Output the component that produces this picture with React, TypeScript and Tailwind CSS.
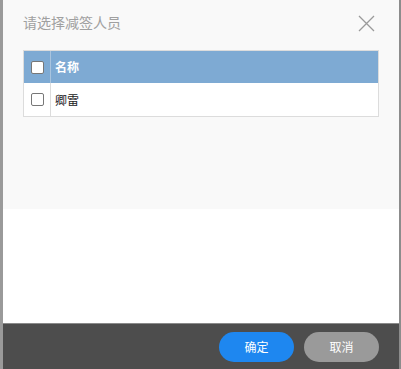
const App = () => {
	return (
		<div
			className="flex h-[369px] w-[401px] flex-col border-l-[3px] border-r-[2px] border-l-[#9a9a9a] border-r-[#8c8c8c] bg-white"
			style={{ fontFamily: '"Noto Sans CJK SC", "Liberation Sans", sans-serif' }}
		>
			<div className="h-[209px] bg-[#f9f9f9] px-[20px]">
				<div className="flex h-[50px] items-start justify-between">
					<p className="mt-[12px] text-[14px] leading-[20px] text-[#a0a0a0]">请选择减签人员</p>
					<svg width="17" height="17" viewBox="0 0 17 17" className="mr-[4px] mt-[15px]">
						<path d="M1 1L16 16M16 1L1 16" stroke="#9a9a9a" strokeWidth="1.3" fill="none" />
					</svg>
				</div>
				<div className="w-[356px] border border-[#dcdcdc] bg-white">
					<div className="flex h-[32px] bg-[#7eaad3]">
						<div className="flex w-[27px] items-center justify-center border-r border-[#a9c4de]">
							<span className="block h-[13px] w-[13px] rounded-[2px] border border-[#777] bg-white" />
						</div>
						<div className="flex items-center pl-[4px] text-[12px] font-bold text-white">名称</div>
					</div>
					<div className="flex h-[33px]">
						<div className="flex w-[27px] items-center justify-center border-r border-[#dcdcdc]">
							<span className="block h-[13px] w-[13px] rounded-[2px] border border-[#777] bg-white" />
						</div>
						<div className="flex items-center pl-[4px] text-[12px] text-[#222]">卿雷</div>
					</div>
				</div>
			</div>
			<div className="flex-1 bg-white" />
			<div className="flex h-[46px] items-center justify-end gap-[10px] border-t border-[#8a8a8a] bg-[#4d4d4d] pr-[20px]">
				<button className="h-[30px] w-[75px] rounded-full bg-[#1e87f0] text-[12px] text-white">确定</button>
				<button className="h-[30px] w-[75px] rounded-full bg-[#9a9a9a] text-[12px] text-white">取消</button>
			</div>
		</div>
	);
};

export default App;
